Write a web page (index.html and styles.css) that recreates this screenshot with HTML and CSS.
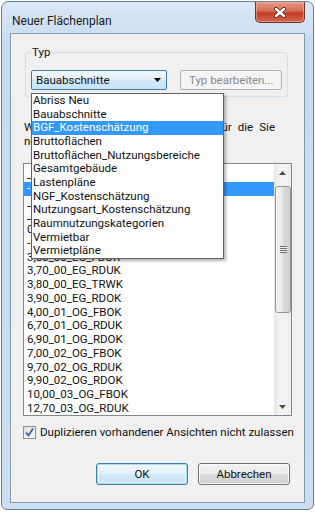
FILE: index.html
```html
<!DOCTYPE html>
<html lang="de">
<head>
    <meta charset="UTF-8">
    <meta name="viewport" content="width=device-width, initial-scale=1.0">
    <title>Neuer Flächenplan</title>
    <link rel="stylesheet" href="styles.css">
</head>
<body>
    <div class="window">
        <div class="titlebar">
            <span class="title">Neuer Flächenplan</span>
            <button class="close-btn" title="Schließen">
                <svg width="14" height="11" viewBox="0 0 14 11">
                    <path d="M3 2 L11 9 M11 2 L3 9" stroke="#5a2a22" stroke-width="4" stroke-linecap="round"/>
                    <path d="M3 2 L11 9 M11 2 L3 9" stroke="#fff" stroke-width="2.4" stroke-linecap="round"/>
                </svg>
            </button>
        </div>

        <div class="client">
            <!-- Typ -->
            <fieldset class="group">
                <legend>Typ</legend>
                <div class="group-row">
                    <div class="combo">
                        <span>Bauabschnitte</span>
                        <svg class="combo-arrow" width="7" height="4" viewBox="0 0 7 4"><path d="M0 0 H7 L3.5 4 Z" fill="#000"/></svg>
                    </div>
                    <button class="btn btn-disabled" disabled>Typ bearbeiten...</button>
                </div>
            </fieldset>

            <p class="hint"><span class="hint-line">Wählen Sie die Ebenen unten aus, für die Sie</span>neue Flächenpläne erstellen möchten:</p>

            <!-- Ebenen -->
            <div class="listbox">
                <ul class="levels">
                    <li>_Ebene_UG</li>
                    <li class="selected">-3,00_UG_FBOK</li>
                    <li>_Ebene_EG</li>
                    <li>_Dach</li>
                    <li>0,00_00_EG_FBOK</li>
                    <li>-0,10_00_EG_RDOK</li>
                    <li>3,60_00_EG_FBOK</li>
                    <li>3,70_00_EG_RDUK</li>
                    <li>3,80_00_EG_TRWK</li>
                    <li>3,90_00_EG_RDOK</li>
                    <li>4,00_01_OG_FBOK</li>
                    <li>6,70_01_OG_RDUK</li>
                    <li>6,90_01_OG_RDOK</li>
                    <li>7,00_02_OG_FBOK</li>
                    <li>9,70_02_OG_RDUK</li>
                    <li>9,90_02_OG_RDOK</li>
                    <li>10,00_03_OG_FBOK</li>
                    <li>12,70_03_OG_RDUK</li>
                    <li>13,00_04_OG_FBOK</li>
                </ul>
                <div class="scrollbar">
                    <div class="sb-arrow">
                        <svg width="7" height="4" viewBox="0 0 7 4"><path d="M0 4 H7 L3.5 0 Z" fill="#4d4d4d"/></svg>
                    </div>
                    <div class="sb-thumb">
                        <span class="grip"></span>
                    </div>
                    <div class="sb-track"></div>
                    <div class="sb-arrow">
                        <svg width="7" height="4" viewBox="0 0 7 4"><path d="M0 0 H7 L3.5 4 Z" fill="#4d4d4d"/></svg>
                    </div>
                </div>
            </div>

            <label class="check">
                <span class="checkbox">
                    <svg width="11" height="11" viewBox="0 0 11 11"><path d="M2 5.5 L4.5 8.5 L9 1.5" fill="none" stroke="#3d5e9e" stroke-width="1.8"/></svg>
                </span>
                Duplizieren vorhandener Ansichten nicht zulassen
            </label>

            <div class="actions">
                <button class="btn btn-default">OK</button>
                <button class="btn">Abbrechen</button>
            </div>

            <!-- offene Auswahlliste -->
            <ul class="dropdown">
                <li>Abriss Neu</li>
                <li>Bauabschnitte</li>
                <li class="active">BGF_Kostenschätzung</li>
                <li>Bruttoflächen</li>
                <li>Bruttoflächen_Nutzungsbereiche</li>
                <li>Gesamtgebäude</li>
                <li>Lastenpläne</li>
                <li>NGF_Kostenschätzung</li>
                <li>Nutzungsart_Kostenschätzung</li>
                <li>Raumnutzungskategorien</li>
                <li>Vermietbar</li>
                <li>Vermietpläne</li>
            </ul>
        </div>
    </div>
</body>
</html>
```

FILE: styles.css
```css
/* Basic Styles */
body {
    margin: 0;
    background: #fff;
    font-family: Roboto, "Liberation Sans", sans-serif;
    font-size: 11.5px;
    color: #111;
}

.window {
    box-sizing: border-box;
    width: 313px;
    margin: 1px 0 0 1px;
    padding: 0 8px 6px;
    border: 1px solid #6d7f94;
    border-radius: 7px 7px 6px 6px;
    background: linear-gradient(#dbe8f6, #c8dbf0 40px, #cbdef2);
}

/* Title bar */
.titlebar {
    display: flex;
    align-items: flex-start;
    height: 31px;
}

.title {
    padding: 12px 0 0 2px;
    font-size: 12px;
    line-height: 15px;
    color: #1b1b1b;
}

.close-btn {
    display: flex;
    align-items: center;
    justify-content: center;
    width: 50px;
    height: 21px;
    margin-left: auto;
    padding: 0;
    border: 1px solid #6e3227;
    border-top: none;
    border-radius: 0 0 5px 5px;
    background: linear-gradient(#e69c8b, #d66a52 45%, #c23b22 55%, #d06a50);
    box-shadow: inset 0 0 0 1px rgba(255, 190, 175, 0.5);
}

/* Client area */
.client {
    position: relative;
    padding: 0 12px 17px;
    border: 1px solid #8397ad;
    background: #f0f0f0;
}

.group {
    margin: 11px 4px 0 2px;
    padding: 10px 5px 6px;
    border: 1px solid #d5dfe5;
    border-radius: 3px;
    min-width: 0;
}

.group legend {
    padding: 0 1px;
    line-height: 15px;
}

.group-row {
    display: flex;
    align-items: center;
    gap: 13px;
}

.combo {
    box-sizing: border-box;
    display: flex;
    align-items: center;
    width: 137px;
    height: 20px;
    padding: 0 3px 0 4px;
    border: 1px solid #3c7fb1;
    border-radius: 2px;
    background: linear-gradient(#f1f8fd, #e2eff9 50%, #d2e8f8 51%, #c7e2f6);
}

.combo-arrow {
    margin-left: auto;
    margin-right: 2px;
}

.btn {
    box-sizing: border-box;
    width: 92px;
    height: 22px;
    padding: 0;
    font-family: inherit;
    font-size: 11.5px;
    color: #111;
    border: 1px solid #707070;
    border-radius: 3px;
    background: linear-gradient(#f2f2f2, #ebebeb 50%, #dddddd 51%, #cfcfcf);
    box-shadow: inset 0 0 0 1px rgba(255, 255, 255, 0.75);
}

.btn-default {
    border-color: #3c7fb1;
    background: linear-gradient(#f0f7fc, #e3f0fa 50%, #d4e9f8 51%, #cbe3f5);
    box-shadow: inset 0 0 0 1px #a9dbf6, inset 0 0 0 2px rgba(255, 255, 255, 0.4);
}

.btn-disabled {
    width: 102px;
    height: 20px;
    margin-top: -1px;
    color: #8a8a8a;
    border-color: #adb2b5;
    background: #f4f4f4;
    box-shadow: none;
}

.hint {
    margin: 23px 0 0;
    padding-left: 1px;
    line-height: 14px;
}

.hint-line {
    display: block;
    width: 251px;
    text-align: justify;
    text-align-last: justify;
}

/* Level list */
.listbox {
    box-sizing: border-box;
    display: flex;
    height: 253px;
    margin-top: 15px;
    border: 1px solid #828790;
    background: #fff;
}

.levels {
    flex: 1;
    margin: 0;
    padding: 4px 0 0;
    list-style: none;
    overflow: hidden;
    line-height: 13.75px;
}

.levels li {
    padding-left: 3px;
    white-space: nowrap;
}

.levels .selected {
    background: #3399ff;
    color: #fff;
}

.scrollbar {
    display: flex;
    flex-direction: column;
    width: 17px;
    background: linear-gradient(to right, #e6e6e6, #f2f2f2 30%, #f2f2f2 70%, #eaeaea);
}

.sb-arrow {
    display: flex;
    align-items: center;
    justify-content: center;
    height: 17px;
}

.sb-thumb {
    display: flex;
    align-items: center;
    justify-content: center;
    height: 125px;
    margin: 5px 0 0 1px;
    border: 1px solid #979797;
    border-radius: 3px;
    background: linear-gradient(to right, #f3f3f3, #e8e8e8 45%, #d9d9d9 55%, #cfcfcf);
}

.grip {
    width: 7px;
    height: 7px;
    background: repeating-linear-gradient(#6a6a6a 0 1px, #f4f4f4 1px 2px);
}

.sb-track {
    flex: 1;
}

.check {
    display: flex;
    align-items: center;
    gap: 4px;
    margin-top: 10px;
    line-height: 13px;
    white-space: nowrap;
}

.checkbox {
    box-sizing: border-box;
    display: flex;
    align-items: center;
    justify-content: center;
    width: 13px;
    height: 13px;
    border: 1px solid #8e8f8f;
    background: linear-gradient(135deg, #dcdcdc, #fbfbfb);
}

.actions {
    display: flex;
    justify-content: flex-end;
    gap: 10px;
    margin-top: 24px;
    padding-right: 2px;
}

/* Open combo list */
.dropdown {
    position: absolute;
    left: 20px;
    top: 59px;
    width: 191px;
    margin: 0;
    padding: 0;
    list-style: none;
    border: 1px solid #646464;
    background: #fff;
    box-shadow: 2px 2px 3px rgba(0, 0, 0, 0.3);
    line-height: 13.67px;
}

.dropdown li {
    padding-left: 1px;
    white-space: nowrap;
}

.dropdown .active {
    background: #3399ff;
    color: #fff;
}
```
